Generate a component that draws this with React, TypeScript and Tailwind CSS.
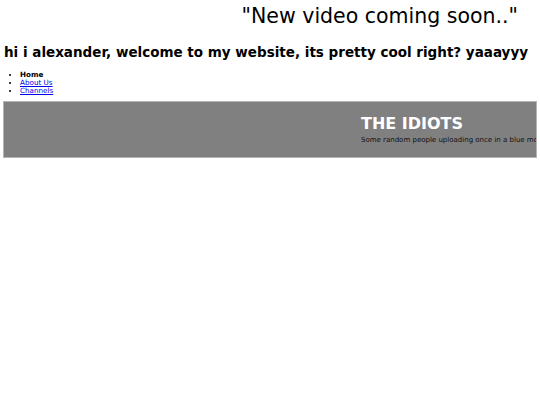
import React from "react";

export default function App() {
    return (
        <div className="min-h-[405px] bg-white text-black" style={{ fontFamily: '"DejaVu Sans", Verdana, sans-serif' }}>
            <div className="pt-[4px] pr-[22px] text-right text-[20.5px] leading-[24px]">"New video coming soon.."</div>

            <h1 className="mt-[16px] pl-[4px] text-[13.5px] font-bold leading-[16px] whitespace-nowrap">
                hi i alexander, welcome to my website, its pretty cool right? yaaayyy
            </h1>

            <ul className="mt-[11px] list-disc pl-[20px] text-[7.2px] leading-[8px]">
                <li className="font-bold">Home</li>
                <li>
                    <a href="#" className="text-[#0000ee] underline">About Us</a>
                </li>
                <li>
                    <a href="#" className="text-[#0000ee] underline">Channels</a>
                </li>
            </ul>

            <div className="mx-[3px] mt-[6px] h-[57px] overflow-hidden border border-[#b4b4b4] bg-[#808080]">
                <div className="pl-[357px] pt-[13px] whitespace-nowrap">
                    <h2 className="text-[16px] font-bold leading-[18px] text-white">THE IDIOTS</h2>
                    <p className="mt-[3px] text-[7px] leading-[9px] text-[#111]">Some random people uploading once in a blue moon</p>
                </div>
            </div>
        </div>
    );
}
